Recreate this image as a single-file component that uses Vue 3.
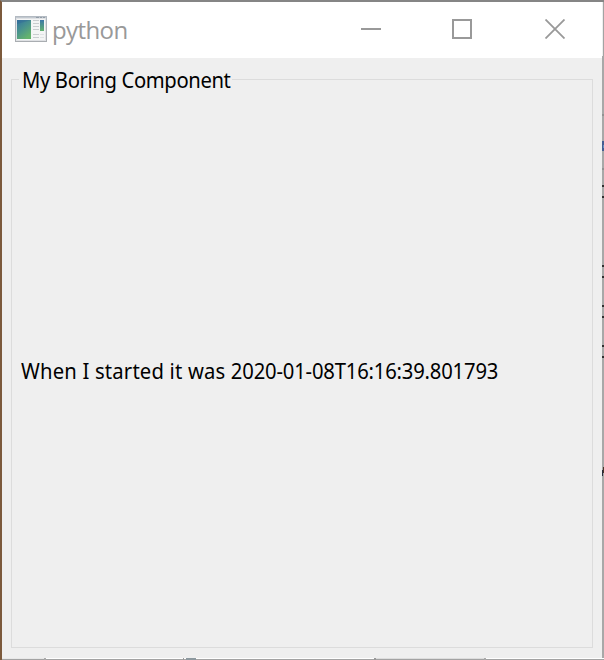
<script setup>
const title = 'python'
const groupTitle = 'My Boring Component'
const message = 'When I started it was '
const timestamp = '2020-01-08T16:16:39.801793'
const fragments = [
  { x: 602, y: 114, w: 2, h: 2, c: '#929292' },
  { x: 602, y: 141, w: 2, h: 10, c: '#455d91' },
  { x: 603, y: 145, w: 1, h: 3, c: '#668fbd' },
  { x: 602, y: 168, w: 2, h: 2, c: '#929292' },
  ...[185, 196, 265, 276, 305, 316, 345, 356].map((y) => ({ x: 602, y, w: 2, h: 2, c: '#303030' })),
  { x: 603, y: 467, w: 1, h: 6, c: '#4a3328' },
  { x: 602, y: 470, w: 1, h: 6, c: '#292b3d' },
  { x: 44, y: 658, w: 2, h: 2, c: '#aaa' },
  { x: 183, y: 658, w: 1, h: 2, c: '#999' },
  { x: 186, y: 658, w: 10, h: 2, c: '#8d999f' },
  { x: 374, y: 658, w: 2, h: 2, c: '#999' },
  { x: 484, y: 658, w: 2, h: 2, c: '#aaa' }
]
</script>

<template>
  <main class="window">
    <header class="titlebar">
      <svg class="app-icon" width="32" height="26" viewBox="0 0 32 26">
        <defs>
          <linearGradient id="pane" x1="0" y1="0" x2=".6" y2="1">
            <stop offset="0" stop-color="#34729f" />
            <stop offset=".48" stop-color="#48918f" />
            <stop offset="1" stop-color="#65b36d" />
          </linearGradient>
          <linearGradient id="strip" x1="0" y1="0" x2="0" y2="1">
            <stop offset="0" stop-color="#3c78a8" />
            <stop offset="1" stop-color="#61b26e" />
          </linearGradient>
          <linearGradient id="frame" x1="0" y1="0" x2="0" y2="1">
            <stop offset="0" stop-color="#b3bac2" />
            <stop offset="1" stop-color="#a9adb1" />
          </linearGradient>
        </defs>
        <rect x=".5" y=".5" width="31" height="25" fill="#dfe1e4" stroke="url(#frame)" />
        <path d="M1 1.5H31" stroke="#c1c8cf" />
        <path d="M21 1.5H24M25 1.5H27M28 1.5H30" stroke="#929da8" />
        <rect x="2" y="3" width="28" height="21" fill="#f4f5f5" />
        <rect x="2" y="4" width="14" height="19" fill="url(#pane)" />
        <path d="M2 8Q9 6 16 4H2Z" fill="#2f6795" opacity=".4" />
        <path d="M18 4.5H24M18 7.5H24M18 10.5H24M18 13.5H24M18 18.5H24M18 21.5H24" stroke="#c9cdcf" />
        <rect x="25" y="4" width="4" height="11" fill="url(#strip)" />
        <path d="M25 18.5H29M25 21.5H29" stroke="#e0e3e4" />
      </svg>
      <span class="title">{{ title }}</span>
      <div class="controls">
        <svg width="20" height="20" viewBox="0 0 20 20"><path d="M0 10H20" /></svg>
        <svg width="20" height="20" viewBox="0 0 20 20"><rect x="1" y="1" width="18" height="18" /></svg>
        <svg class="close" width="20" height="20" viewBox="0 0 20 20"><path d="M.5 .5L19.5 19.5M19.5 .5L.5 19.5" /></svg>
      </div>
    </header>
    <section class="content">
      <div class="group">
        <div class="legend"><span class="narrow">{{ groupTitle }}</span></div>
        <p class="message narrow"><span class="words">{{ message }}</span><span class="time">{{ timestamp }}</span></p>
      </div>
    </section>
    <svg class="edge" width="604" height="660">
      <rect x="602" y="2" width="1" height="54" fill="#eee" />
      <rect x="603" y="2" width="1" height="56" fill="#a3a3a3" />
      <rect x="602" y="56" width="2" height="602" fill="#a8a8a8" />
      <rect x="2" y="658" width="602" height="1" fill="#fff" />
      <rect x="2" y="658" width="42" height="1" fill="#e8e8e8" />
      <rect x="376" y="658" width="108" height="1" fill="#ddd" />
      <rect x="2" y="659" width="602" height="1" fill="#a3a3a3" />
      <rect v-for="(f, i) in fragments" :key="i" :x="f.x" :y="f.y" :width="f.w" :height="f.h" :fill="f.c" />
    </svg>
  </main>
</template>

<style>
body { margin: 0; overflow: hidden; }
</style>

<style scoped>
.window {
  box-sizing: border-box;
  position: relative;
  width: 604px;
  height: 660px;
  display: flex;
  flex-direction: column;
  border-top: 2px solid #858585;
  border-left: 2px solid #7c5a3c;
  background: #efefef;
  overflow: hidden;
}
.titlebar {
  box-sizing: border-box;
  flex: 0 0 56px;
  display: flex;
  align-items: center;
  padding: 0 39px 2px 13px;
  background: #fff;
}
.app-icon { flex: none; }
.title {
  margin: 2px 0 0 5px;
  font: 24px/32px "Open Sans", sans-serif;
  letter-spacing: -0.6px;
  color: #999;
}
.controls {
  display: flex;
  gap: 71px;
  margin-left: auto;
}
.controls svg {
  display: block;
  fill: none;
  stroke: #999;
  stroke-width: 2;
}
.controls .close {
  margin-left: 2px;
  stroke-width: 1.8;
}
.content {
  box-sizing: border-box;
  flex: 1;
  display: flex;
  padding: 21px 11px 12px 9px;
}
.group {
  box-sizing: border-box;
  flex: 1;
  display: flex;
  flex-direction: column;
  border: 1px solid #dcdcdc;
  font: 22px/28px "Noto Sans", sans-serif;
  color: #000;
}
.legend {
  box-sizing: border-box;
  width: 213px;
  height: 28px;
  margin: -15px 0 0 7px;
  padding-left: 3px;
  background: #efefef;
  letter-spacing: -0.4px;
}
.narrow {
  display: inline-block;
  white-space: pre;
  transform: scaleX(0.92);
  transform-origin: left center;
}
.message {
  align-self: flex-start;
  margin: auto 0 auto 9px;
}
.words { letter-spacing: 0.2px; }
.time { letter-spacing: -0.2px; }
.edge {
  position: absolute;
  left: -2px;
  top: -2px;
  pointer-events: none;
}
</style>
